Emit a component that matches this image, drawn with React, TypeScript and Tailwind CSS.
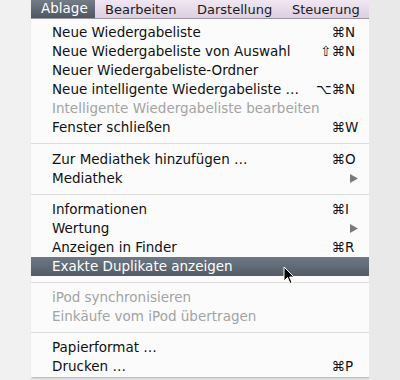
type Item =
  | { kind: 'sep'; tall?: boolean }
  | {
      kind: 'item';
      label: string;
      mods?: string;
      keyChar?: string;
      submenu?: boolean;
      disabled?: boolean;
      active?: boolean;
    };

const items: Item[] = [
  { kind: 'item', label: 'Neue Wiedergabeliste', mods: '⌘', keyChar: 'N' },
  { kind: 'item', label: 'Neue Wiedergabeliste von Auswahl', mods: '⇧⌘', keyChar: 'N' },
  { kind: 'item', label: 'Neuer Wiedergabeliste-Ordner' },
  { kind: 'item', label: 'Neue intelligente Wiedergabeliste …', mods: '⌥⌘', keyChar: 'N' },
  { kind: 'item', label: 'Intelligente Wiedergabeliste bearbeiten', disabled: true },
  { kind: 'item', label: 'Fenster schließen', mods: '⌘', keyChar: 'W' },
  { kind: 'sep', tall: true },
  { kind: 'item', label: 'Zur Mediathek hinzufügen …', mods: '⌘', keyChar: 'O' },
  { kind: 'item', label: 'Mediathek', submenu: true },
  { kind: 'sep' },
  { kind: 'item', label: 'Informationen', mods: '⌘', keyChar: 'I' },
  { kind: 'item', label: 'Wertung', submenu: true },
  { kind: 'item', label: 'Anzeigen in Finder', mods: '⌘', keyChar: 'R' },
  { kind: 'item', label: 'Exakte Duplikate anzeigen', active: true },
  { kind: 'sep' },
  { kind: 'item', label: 'iPod synchronisieren', disabled: true },
  { kind: 'item', label: 'Einkäufe vom iPod übertragen', disabled: true },
  { kind: 'sep' },
  { kind: 'item', label: 'Papierformat …' },
  { kind: 'item', label: 'Drucken …', mods: '⌘', keyChar: 'P' },
];

const MenuRow = ({ item }: { item: Item }) => {
  if (item.kind === 'sep') {
    return (
      <div className={`${item.tall ? 'h-[13px]' : 'h-[12px]'} flex items-center`}>
        <div className="h-px w-full bg-[#dcdcdc]" />
      </div>
    );
  }
  const color = item.active ? 'text-white' : item.disabled ? 'text-[#a3a3a3]' : 'text-[#111]';
  return (
    <div
      className={`h-[19px] flex items-center pl-[21px] pr-[11px] ${color} ${
        item.active ? 'bg-gradient-to-b from-[#6e7985] to-[#535c67]' : ''
      }`}
    >
      <span className="flex-1 whitespace-nowrap">{item.label}</span>
      {item.keyChar && (
        <span className="flex items-center">
          <span className="text-right whitespace-nowrap">{item.mods}</span>
          <span className="w-[13px] text-left">{item.keyChar}</span>
        </span>
      )}
      {item.submenu && (
        <svg width="8" height="9" viewBox="0 0 8 9">
          <path d="M0 0 L8 4.5 L0 9 Z" fill="#7a7a7a" />
        </svg>
      )}
    </div>
  );
};

const App = () => {
  return (
    <div
      className="relative w-[400px] h-[380px] flex bg-[#e9e9e9] text-[13.5px] leading-none overflow-hidden"
      style={{ fontFamily: '"DejaVu Sans", "Liberation Sans", sans-serif' }}
    >
      <div className="w-[31px] h-full bg-[#f1f1f1]" />
      <div className="w-[338px] h-[377px] flex flex-col bg-[#fbfbfb] shadow-[1px_1px_2px_rgba(0,0,0,0.25)]">
        <div className="h-[19px] flex items-stretch bg-gradient-to-b from-[#f1e7f2] to-[#dccfe1] border-b border-[#9c96a0] text-[#1a1a1a] text-[13px]">
          <div className="w-[64px] pl-[10px] flex items-center bg-gradient-to-b from-[#737c87] to-[#4f5761] text-white text-[13.5px]">
            Ablage
          </div>
          <div className="w-[102px] pl-[10px] flex items-center">Bearbeiten</div>
          <div className="w-[95px] flex items-center">Darstellung</div>
          <div className="flex items-center">Steuerung</div>
        </div>
        <div className="pt-[4px] flex flex-col">
          {items.map((item, i) => (
            <MenuRow key={i} item={item} />
          ))}
        </div>
      </div>
      <div className="flex-1 h-full bg-[#e9e9e9]" />
      <svg className="absolute left-[283px] top-[266px]" width="12" height="19" viewBox="0 0 12 19">
        <path
          d="M1 1 L1 15 L4.5 11.5 L7 17.5 L9 16.6 L6.6 11 L11 11 Z"
          fill="#000"
          stroke="#fff"
          strokeWidth="1"
          strokeLinejoin="round"
        />
      </svg>
    </div>
  );
};

export default App;
